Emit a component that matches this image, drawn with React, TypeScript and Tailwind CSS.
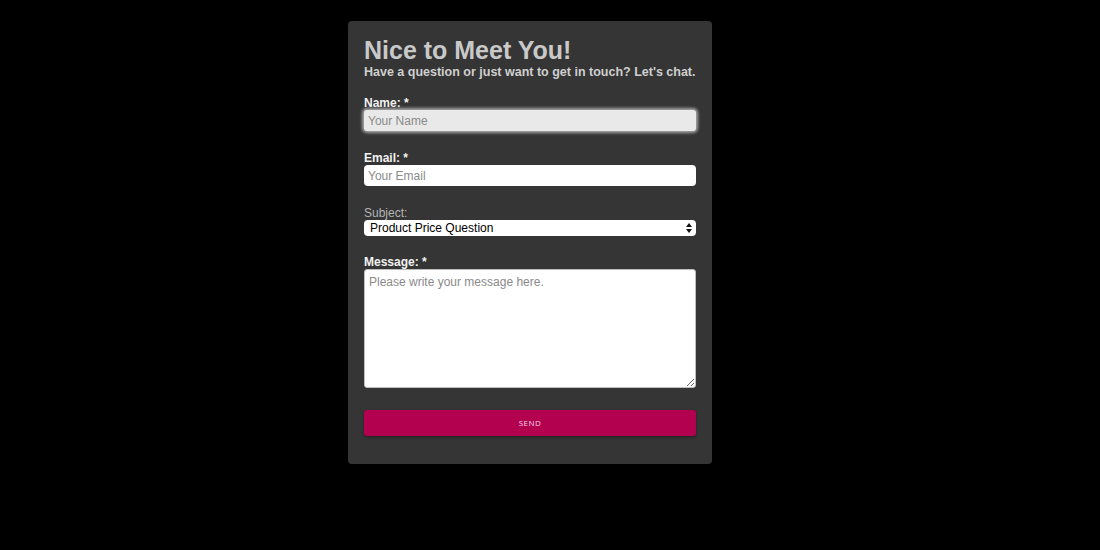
import React from "react";

const font = { fontFamily: '"Liberation Sans", Arial, Helvetica, sans-serif' };

function SelectArrows() {
    return (
        <svg width="6" height="10" viewBox="0 0 6 10" className="absolute right-[4px] top-[3px]">
            <path d="M3 0 L6 4 L0 4 Z" fill="#111" />
            <path d="M3 10 L6 6 L0 6 Z" fill="#111" />
        </svg>
    );
}

export default function App() {
    return (
        <div className="min-h-[550px] w-full bg-black flex justify-center pr-10" style={font}>
            <form
                className="mt-[21px] mb-auto w-[364px] bg-[#353535] rounded-[4px] px-4 pt-[15px] pb-[28px] flex flex-col"
                onSubmit={(e) => e.preventDefault()}
            >
                <h1 className="text-[25px] leading-[28px] font-bold text-[#c9c9c9]">Nice to Meet You!</h1>
                <p className="text-[12.5px] leading-[16px] font-bold text-[#cfcfcf] whitespace-nowrap">
                    Have a question or just want to get in touch? Let's chat.
                </p>

                {/* name */}
                <label className="mt-[16px] text-[12px] leading-[14px] font-bold text-[#f2f2f2]">Name: *</label>
                <input
                    type="text"
                    placeholder="Your Name"
                    className="h-[21px] w-full rounded-[3px] bg-[#e9e9e9] px-[4px] text-[12px] text-black placeholder:text-[#8a8a8a] outline-none shadow-[0_0_3px_2px_rgba(200,200,200,0.75)]"
                />

                {/* email */}
                <label className="mt-[20px] text-[12px] leading-[14px] font-bold text-[#f2f2f2]">Email: *</label>
                <input
                    type="email"
                    placeholder="Your Email"
                    className="h-[21px] w-full rounded-[4px] bg-white px-[4px] text-[12px] text-black placeholder:text-[#8a8a8a] outline-none"
                />

                {/* subject */}
                <label className="mt-[20px] text-[12px] leading-[14px] text-[#b4b4b4]">Subject:</label>
                <div className="relative h-[16px] w-full rounded-[4px] bg-white">
                    <span className="absolute left-[6px] top-0 text-[12px] leading-[16px] text-black">Product Price Question</span>
                    <SelectArrows />
                </div>

                {/* message */}
                <label className="mt-[19px] text-[12px] leading-[14px] font-bold text-[#f2f2f2]">Message: *</label>
                <textarea
                    placeholder="Please write your message here."
                    className="h-[119px] w-full rounded-[3px] bg-white px-[4px] py-[3px] text-[12px] text-black placeholder:text-[#8a8a8a] outline-none border border-[#bdbdbd]"
                />

                <button
                    type="submit"
                    className="mt-[22px] h-[26px] w-full rounded-[3px] bg-[#b3004f] text-[8px] tracking-[0.5px] text-[#f5d9e6] shadow-[0_1px_3px_rgba(0,0,0,0.4)]"
                    style={{ fontFamily: '"Open Sans", "Noto Sans", sans-serif' }}
                >
                    SEND
                </button>
            </form>
        </div>
    );
}
